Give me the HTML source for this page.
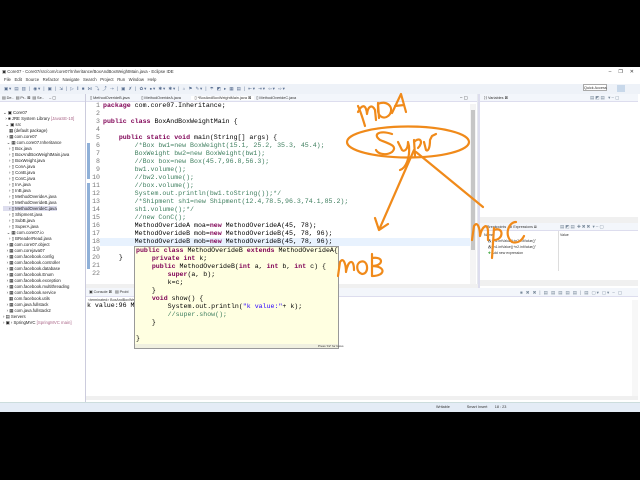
<!DOCTYPE html>
<html><head><meta charset="utf-8"><style>
*{margin:0;padding:0;box-sizing:border-box}
body{width:640px;height:480px;background:#000;position:relative;overflow:hidden;font-family:"Liberation Sans",sans-serif}
.a{position:absolute}
.win{left:0;top:67px;width:640px;height:345px;background:#fff}
.small{font-size:4.3px;color:#333;white-space:nowrap}
.tree div{height:6px;line-height:6px;font-size:4.3px;color:#222;white-space:nowrap}
.code{font-family:"Liberation Mono",monospace;font-size:6.6px;line-height:8px;white-space:pre;color:#000}
.k{color:#7f0055;font-weight:bold}
.c{color:#3f7f5f}
.s{color:#2a00ff}
.ln{font-family:"Liberation Mono",monospace;font-size:6.6px;line-height:8px;color:#787878;white-space:pre;text-align:right}
</style></head><body>
<div class="a win"></div>
<div class="a small" style="left:2px;top:68px;width:636px;height:8px;line-height:8px">&#9635; Core07 - Core07/src/com/core07/Inheritance/BoxAndBoxWeightMain.java - Eclipse IDE<span style="position:absolute;right:4px;font-size:5px">–&nbsp;&nbsp;&nbsp;&nbsp;&nbsp;&#10064;&nbsp;&nbsp;&nbsp;&nbsp;&nbsp;✕</span></div>
<div class="a small" style="left:4px;top:76px;height:8px;line-height:8px">File&nbsp;&nbsp; Edit&nbsp;&nbsp; Source&nbsp;&nbsp; Refactor&nbsp;&nbsp; Navigate&nbsp;&nbsp; Search&nbsp;&nbsp; Project&nbsp;&nbsp; Run&nbsp;&nbsp; Window&nbsp;&nbsp; Help</div>
<div class="a" style="left:0;top:84px;width:640px;height:10px;background:#eef2f8"></div>
<div class="a small" style="left:4px;top:84px;height:10px;line-height:10px;color:#5a6f90;letter-spacing:1px">▣▾ ▤ ▥ | ◉▾ | ▣ | ⇲ | ▷ ‖ ■ ⋈ ⤵ ⤴ ⇢ | ▣ ✗ | ✿▾ ●▾ ✱▾ ✱▾ | ⌂ ⚑ ✎▾ | ☂ ◩ ▸ ▦ ▤ | ⇤▾ ⇥▾ ⇦▾ ⇨▾</div>
<div class="a small" style="left:583px;top:84px;width:24px;height:7px;line-height:6px;border:1px solid #aaa;background:#fff;font-size:3.8px">Quick Access</div>
<div class="a" style="left:617px;top:85px;width:8px;height:7px;background:#c8d8ea"></div>
<div class="a" style="left:0;top:94px;width:86px;height:8px;background:#f3f6fb;border-bottom:1px solid #dde"></div>
<div class="a small" style="left:2px;top:94px;line-height:8px;font-size:3.8px">▤ De..&nbsp; ▤ Pr.. ⊠&nbsp; ▤ Se..&nbsp;&nbsp;&nbsp;&nbsp; – ▢</div>
<div class="a tree" style="left:3px;top:110px">
<div>⌄ ▣ Core07</div>
<div>&nbsp;&nbsp;› ■ JRE System Library <span style="color:#a68">[JavaSE-10]</span></div>
<div>&nbsp;&nbsp;⌄ ▣ src</div>
<div>&nbsp;&nbsp;&nbsp;&nbsp;&nbsp;▦ (default package)</div>
<div>&nbsp;&nbsp;&nbsp;› ▦ com.core07</div>
<div>&nbsp;&nbsp;&nbsp;⌄ ▦ com.core07.Inheritance</div>
<div>&nbsp;&nbsp;&nbsp;&nbsp;&nbsp;› ▯ Box.java</div>
<div>&nbsp;&nbsp;&nbsp;&nbsp;&nbsp;› ▯ BoxAndBoxWeightMain.java</div>
<div>&nbsp;&nbsp;&nbsp;&nbsp;&nbsp;› ▯ BoxWeight.java</div>
<div>&nbsp;&nbsp;&nbsp;&nbsp;&nbsp;› ▯ ConA.java</div>
<div>&nbsp;&nbsp;&nbsp;&nbsp;&nbsp;› ▯ ConB.java</div>
<div>&nbsp;&nbsp;&nbsp;&nbsp;&nbsp;› ▯ ConC.java</div>
<div>&nbsp;&nbsp;&nbsp;&nbsp;&nbsp;› ▯ InA.java</div>
<div>&nbsp;&nbsp;&nbsp;&nbsp;&nbsp;› ▯ InB.java</div>
<div>&nbsp;&nbsp;&nbsp;&nbsp;&nbsp;› ▯ MethodOverideA.java</div>
<div>&nbsp;&nbsp;&nbsp;&nbsp;&nbsp;› ▯ MethodOverideB.java</div>
<div><span style="background:#dde">&nbsp;&nbsp;&nbsp;&nbsp;&nbsp;› ▯ MethodOverideC.java</span></div>
<div>&nbsp;&nbsp;&nbsp;&nbsp;&nbsp;› ▯ Shipment.java</div>
<div>&nbsp;&nbsp;&nbsp;&nbsp;&nbsp;› ▯ SubB.java</div>
<div>&nbsp;&nbsp;&nbsp;&nbsp;&nbsp;› ▯ SuperA.java</div>
<div>&nbsp;&nbsp;&nbsp;⌄ ▦ com.core07.io</div>
<div>&nbsp;&nbsp;&nbsp;&nbsp;&nbsp;› ▯ BReaderRead.java</div>
<div>&nbsp;&nbsp;&nbsp;› ▦ com.core07.object</div>
<div>&nbsp;&nbsp;&nbsp;› ▦ com.corejava07</div>
<div>&nbsp;&nbsp;&nbsp;› ▦ com.facebook.config</div>
<div>&nbsp;&nbsp;&nbsp;› ▦ com.facebook.controller</div>
<div>&nbsp;&nbsp;&nbsp;› ▦ com.facebook.database</div>
<div>&nbsp;&nbsp;&nbsp;› ▦ com.facebook.Enum</div>
<div>&nbsp;&nbsp;&nbsp;› ▦ com.facebook.exception</div>
<div>&nbsp;&nbsp;&nbsp;› ▦ com.facebook.multithreading</div>
<div>&nbsp;&nbsp;&nbsp;› ▦ com.facebook.service</div>
<div>&nbsp;&nbsp;&nbsp;&nbsp;&nbsp;▦ com.facebook.utils</div>
<div>&nbsp;&nbsp;&nbsp;› ▦ com.java.fullstack</div>
<div>&nbsp;&nbsp;&nbsp;› ▦ com.java.fullstack2</div>
<div>› ▤ Servers</div>
<div>› ▣ › SpringMVC <span style="color:#a68">[SpringMVC main]</span></div>
</div>
<div class="a" style="left:85px;top:94px;width:1px;height:308px;background:#ccd"></div>
<div class="a" style="left:86px;top:94px;width:392px;height:8px;background:#f3f6fb;border-bottom:1px solid #dde"></div>
<div class="a small" style="left:90px;top:94px;line-height:8px;font-size:3.8px">▯ MethodOverideB.java&nbsp;&nbsp;&nbsp;&nbsp;&nbsp;&nbsp;&nbsp;&nbsp;&nbsp;&nbsp; ▯ MethodOverideA.java&nbsp;&nbsp;&nbsp;&nbsp;&nbsp;&nbsp;&nbsp;&nbsp;&nbsp;&nbsp;<span style="background:#fff;padding:0 3px">▯ *BoxAndBoxWeightMain.java ⊠</span>&nbsp; ▯ MethodOverideC.java</div>
<div class="a small" style="left:460px;top:94px;line-height:8px">– ▢</div>
<div class="a" style="left:87px;top:143px;width:3px;height:36px;background:#8fb0d8"></div>
<div class="a" style="left:87px;top:183px;width:3px;height:86px;background:#8fb0d8"></div>
<div class="a ln" style="left:88px;top:102px;width:12px">1
2
3
4
5
6
7
8
9
10
11
12
13
14
15
16
17
18
19
20
21
22</div>
<div class="a" style="left:100px;top:238px;width:370px;height:8px;background:#e8f2fe"></div>
<div class="a code" style="left:103px;top:102px"><span class="k">package</span> com.core07.Inheritance;

<span class="k">public class</span> BoxAndBoxWeightMain {

    <span class="k">public static void</span> main(String[] args) {
        <span class="c">/*Box bw1=new BoxWeight(15.1, 25.2, 35.3, 45.4);</span>
<span class="c">        BoxWeight bw2=new BoxWeight(bw1);</span>
<span class="c">        //Box box=new Box(45.7,96.8,56.3);</span>
<span class="c">        bw1.volume();</span>
<span class="c">        //bw2.volume();</span>
<span class="c">        //box.volume();</span>
<span class="c">        System.out.println(bw1.toString());*/</span>
<span class="c">        /*Shipment sh1=new Shipment(12.4,78.5,96.3,74.1,85.2);</span>
<span class="c">        sh1.volume();*/</span>
<span class="c">        //new ConC();</span>
        MethodOverideA moa=<span class="k">new</span> MethodOverideA(45, 78);
        MethodOverideB mob=<span class="k">new</span> MethodOverideB(45, 78, 96);
        MethodOverideB mob=<span class="k">new</span> MethodOverideB(45, 78, 96);

    }</div>
<div class="a" style="left:470px;top:104px;width:6px;height:180px;background:#f4f4f4"></div>
<div class="a" style="left:471px;top:110px;width:4px;height:140px;background:#c6c6c6"></div>
<div class="a" style="left:477px;top:94px;width:3px;height:192px;background:#e6e9ee"></div>
<div class="a" style="left:86px;top:284px;width:392px;height:4px;background:#f0f0f0"></div>
<div class="a" style="left:480px;top:94px;width:158px;height:8px;background:#f3f6fb;border-bottom:1px solid #dde"></div>
<div class="a small" style="left:484px;top:94px;line-height:8px;font-size:3.8px">⟩⟩ Variables ⊠</div>
<div class="a small" style="left:590px;top:94px;line-height:8px;color:#789">▤ ◩ ▤&nbsp;&nbsp; ▾ – ▢</div>
<div class="a" style="left:480px;top:217px;width:158px;height:6px;background:#f0f0f0"></div>
<div class="a" style="left:480px;top:223px;width:158px;height:8px;background:#f3f6fb;border-bottom:1px solid #dde"></div>
<div class="a small" style="left:484px;top:223px;line-height:8px;font-size:3.6px">⌁ Breakpoints&nbsp;&nbsp; ⚙ Expressions ⊠</div>
<div class="a small" style="left:560px;top:223px;line-height:8px;color:#789">▤ ◩ ▤ &nbsp;✚ ✖ ✖&nbsp; ▾ – ▢</div>
<div class="a small" style="left:484px;top:232px;font-size:3.5px;line-height:6px">Name<span style="position:absolute;left:76px">Value</span><br>&nbsp;&nbsp;&nbsp; ⁂ "n1.intValue()+n2.intValue()"<br>&nbsp;&nbsp;&nbsp; ⁂ "n1.intValue()+n2.intValue()"<br>&nbsp;&nbsp;&nbsp; <span style="color:#4a4">✚</span> Add new expression</div>
<div class="a" style="left:558px;top:231px;width:1px;height:40px;background:#ddd"></div>
<div class="a" style="left:480px;top:280px;width:158px;height:6px;background:#f0f0f0"></div>
<div class="a" style="left:478px;top:94px;width:2px;height:194px;background:#dde"></div>
<div class="a" style="left:86px;top:288px;width:552px;height:9px;background:#f3f6fb;border-bottom:1px solid #dde"></div>
<div class="a small" style="left:89px;top:288px;line-height:9px;font-size:3.8px">▣ Console ⊠&nbsp;&nbsp; ▤ Probl</div>
<div class="a small" style="left:520px;top:288px;line-height:9px;color:#789;letter-spacing:1px">■ ✖ ✖ | ▤ ▤ ▤ ▤ ▤ | ▤ ▢▾ ▢▾ – ▢</div>
<div class="a small" style="left:88px;top:297px;font-size:3.6px;line-height:6px">&lt;terminated&gt; BoxAndBoxWeightMain [Java Application]</div>
<div class="a code" style="left:87px;top:302px;color:#000">k value:96 M</div>
<div class="a" style="left:86px;top:396px;width:552px;height:4px;background:#f0f0f0"></div>
<div class="a" style="left:632px;top:300px;width:6px;height:96px;background:#f7f7f7"></div>
<div class="a" style="left:0;top:402px;width:640px;height:10px;background:#e4ecf6;border-top:1px solid #cdd"></div>
<div class="a small" style="left:436px;top:402px;line-height:10px;font-size:3.8px">Writable&nbsp;&nbsp;&nbsp;&nbsp;&nbsp;&nbsp;&nbsp;&nbsp;&nbsp;&nbsp;&nbsp;&nbsp;&nbsp;&nbsp;&nbsp; Smart Insert&nbsp;&nbsp;&nbsp;&nbsp;&nbsp;&nbsp; 18 : 23</div>
<div class="a" style="left:134px;top:246px;width:205px;height:103px;background:#ffffe1;border:1px solid #999"></div>
<div class="a code" style="left:136px;top:247px"><span class="k">public class</span> MethodOverideB <span class="k">extends</span> MethodOverideA{
    <span class="k">private int</span> k;
    <span class="k">public</span> MethodOverideB(<span class="k">int</span> a, <span class="k">int</span> b, <span class="k">int</span> c) {
        <span class="k">super</span>(a, b);
        k=c;
    }
    <span class="k">void</span> show() {
        System.out.println(<span class="s">"k value:"</span>+ k);
        <span class="c">//super.show();</span>
    }

}</div>
<div class="a" style="left:135px;top:344px;width:203px;height:4px;background:#f0f0e0"></div>
<div class="a small" style="left:318px;top:344px;font-size:3px;line-height:4px">Press 'F2' for focus</div>
<svg class="a" style="left:0;top:0" width="640" height="480" viewBox="0 0 640 480" fill="none" stroke="#f08a1a" stroke-width="2.2" stroke-linecap="round" stroke-linejoin="round">
<ellipse cx="408" cy="142" rx="61" ry="15.5"/>
<path d="M365 126 C362 116,360 110,358 106 M358 112 C362 104,366 104,367 114 C368 106,372 104,375 110 L376 120"/>
<path d="M378 104 C386 100,394 106,390 114 C386 120,378 118,378 110 Z M378 103 L379 118"/>
<path d="M392 113 L401 94 L406 112 M395 106 L404 105"/>
<path d="M392 134 C380 130,372 134,380 140 C390 144,398 146,392 152 C386 156,378 154,376 150"/>
<path d="M398 142 L402 150 C404 152,408 150,408 142 L409 146 C410 158,406 168,400 170"/>
<path d="M414 140 L415 156 M414 142 C420 136,424 142,418 148"/>
<path d="M424 142 L426 150 C428 152,430 148,430 140 L432 136 L436 134"/>
<path d="M414 150 L379 230 M379 230 L375 218 M379 230 L388 224"/>
<path d="M416 152 L483 207"/>
<path d="M338 276 L340 262 C344 256,346 266,346 272 C348 260,354 258,354 270"/>
<path d="M360 262 C368 258,370 274,362 274 C356 272,356 264,360 262 Z"/>
<path d="M372 254 L372 276 M372 258 C384 256,384 266,372 266 C386 266,386 276,372 276"/>
<path d="M472 240 L474 226 C478 220,480 230,480 236 C482 226,488 222,488 232 L488 240"/>
<path d="M494 228 L492 258 M494 230 C504 226,504 240,494 240"/>
<path d="M516 222 C508 222,504 236,512 242 C518 244,522 240,524 236"/>
</svg>
<div class="a" style="left:0;top:412px;width:640px;height:68px;background:#000"></div>
</body></html>
